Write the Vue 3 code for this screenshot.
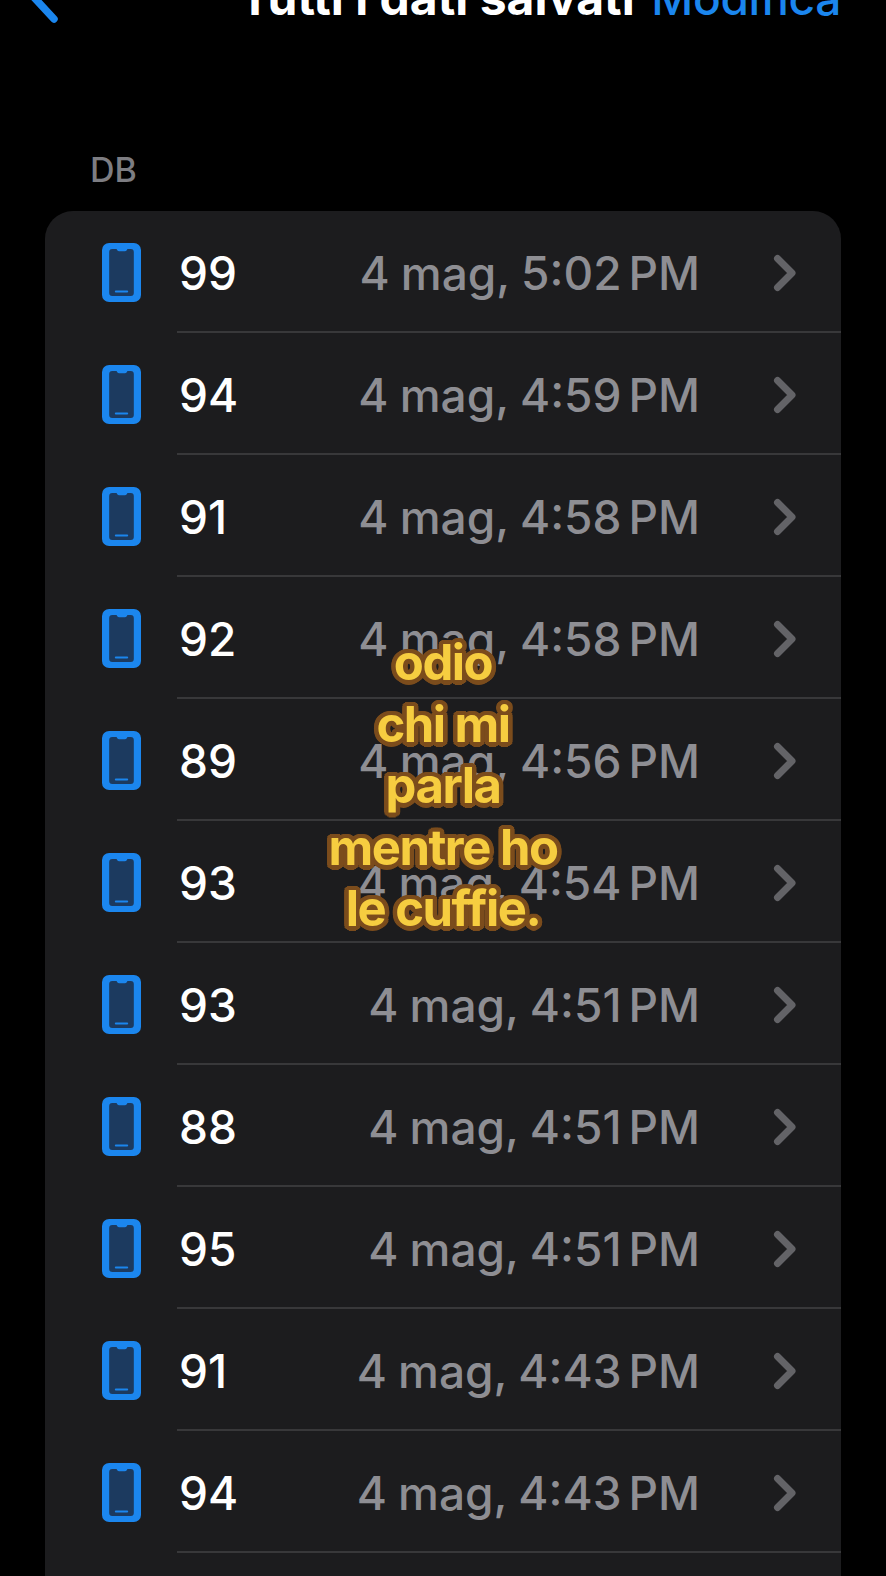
<script setup>
const rows = [
  { value: 99, time: '5:02' },
  { value: 94, time: '4:59' },
  { value: 91, time: '4:58' },
  { value: 92, time: '4:58' },
  { value: 89, time: '4:56' },
  { value: 93, time: '4:54' },
  { value: 93, time: '4:51' },
  { value: 88, time: '4:51' },
  { value: 95, time: '4:51' },
  { value: 91, time: '4:43' },
  { value: 94, time: '4:43' }
]

const caption = ['odio', 'chi mi', 'parla', 'mentre ho', 'le cuffie.']
</script>

<template>
  <div class="page">
    <header class="nav">
      <svg class="back" viewBox="0 0 34 24" aria-hidden="true">
        <path d="M4 -8 L29 19" fill="none" stroke="#1b86ee" stroke-width="7.500" stroke-linecap="round" />
      </svg>
      <span class="title">Tutti i dati salvati</span>
      <span class="edit">Modifica</span>
    </header>

    <div class="section-label">DB</div>

    <div class="card">
      <div v-for="(row, i) in rows" :key="i" class="row">
        <svg class="phone" viewBox="0 0 38 59" preserveAspectRatio="none" aria-hidden="true">
          <rect width="38" height="59" rx="7" fill="#1b86ee" />
          <path d="M7 9a3 3 0 0 1 3-3h3.500c.8 0 1 .6 1.400 1.200.4.7 1 1 1.800 1h5.600c.8 0 1.400-.3 1.800-1 .4-.6.6-1.200 1.400-1.200H28a3 3 0 0 1 3 3v41a3 3 0 0 1-3 3H10a3 3 0 0 1-3-3z" fill="#1c3a5f" />
          <rect x="12.500" y="47.500" width="13" height="2" rx="1" fill="#1b86ee" />
        </svg>
        <div class="row-body">
          <span class="value">{{ row.value }}</span>
          <span class="date">4 mag, {{ row.time }}<span class="ampm">PM</span></span>
          <svg class="chevron" viewBox="0 0 24 38" aria-hidden="true">
            <path d="M4.500 4.500 L19 19 L4.500 33.500" fill="none" stroke="#636367" stroke-width="7" stroke-linecap="round" stroke-linejoin="round" />
          </svg>
        </div>
      </div>
    </div>

    <div class="caption">
      <div v-for="line in caption" :key="line" class="caption-line">{{ line }}</div>
    </div>
  </div>
</template>

<style>
html,
body {
  background: #000;
}
</style>

<style scoped>
.page {
  position: relative;
  display: flex;
  flex-direction: column;
  width: 886px;
  height: 1576px;
  overflow: hidden;
  background: #000;
  font-family: Inter, "Liberation Sans", sans-serif;
}

.nav {
  display: flex;
  align-items: flex-end;
  flex: none;
  height: 24px;
  padding: 0 45px 0 25px;
  overflow: hidden;
  font-size: 46px;
  line-height: 56px;
}

.back {
  flex: none;
  width: 34px;
  height: 24px;
}

.title {
  margin-left: 180px;
  margin-bottom: -2px;
  font-size: 48px;
  font-weight: 700;
  color: #fff;
  white-space: nowrap;
}

.edit {
  margin-left: auto;
  margin-bottom: -2px;
  color: #1b86ee;
  font-weight: 500;
  letter-spacing: -0.300px;
  white-space: nowrap;
}

.section-label {
  flex: none;
  height: 41px;
  margin-top: 125px;
  margin-bottom: 21px;
  padding-left: 90px;
  font-size: 34px;
  font-weight: 500;
  line-height: 41px;
  color: #7d7d82;
}

.card {
  flex: 1;
  margin: 0 45px;
  background: #1c1c1e;
  border-radius: 28px 28px 0 0;
  overflow: hidden;
}

.row {
  display: flex;
  align-items: center;
  height: 122px;
}

.phone {
  flex: none;
  width: 39px;
  height: 59px;
  margin-left: 57px;
  margin-right: 36px;
}

.row-body {
  display: flex;
  align-items: center;
  flex: 1;
  height: 100%;
  padding-left: 2px;
  padding-right: 44px;
  border-bottom: 2px solid #38383a;
  box-sizing: border-box;
}

.value {
  position: relative;
  top: 2px;
  font-size: 46px;
  font-weight: 500;
  color: #fff;
}

.date {
  position: relative;
  top: 2px;
  margin-left: auto;
  font-size: 46px;
  font-weight: 500;
  word-spacing: -1px;
  color: #8e8e93;
  white-space: nowrap;
}

.ampm {
  margin-left: 7px;
}

.chevron {
  position: relative;
  top: 2px;
  flex: none;
  width: 24px;
  height: 38px;
  margin-left: 73px;
}

.caption {
  position: absolute;
  top: 632px;
  left: 0;
  width: 886px;
  text-align: center;
}

.caption-line {
  height: 61.500px;
  font-size: 49px;
  font-weight: 700;
  line-height: 61.500px;
  letter-spacing: -1.500px;
  color: #f6cd40;
  text-shadow:
    4.500px 0 0 #7b4c1c, -4.500px 0 0 #7b4c1c, 0 4.500px 0 #7b4c1c, 0 -4.500px 0 #7b4c1c,
    3.200px 3.200px 0 #7b4c1c, -3.200px 3.200px 0 #7b4c1c, 3.200px -3.200px 0 #7b4c1c, -3.200px -3.200px 0 #7b4c1c,
    4.200px 1.700px 0 #7b4c1c, -4.200px 1.700px 0 #7b4c1c, 4.200px -1.700px 0 #7b4c1c, -4.200px -1.700px 0 #7b4c1c,
    1.700px 4.200px 0 #7b4c1c, -1.700px 4.200px 0 #7b4c1c, 1.700px -4.200px 0 #7b4c1c, -1.700px -4.200px 0 #7b4c1c;
}
</style>
